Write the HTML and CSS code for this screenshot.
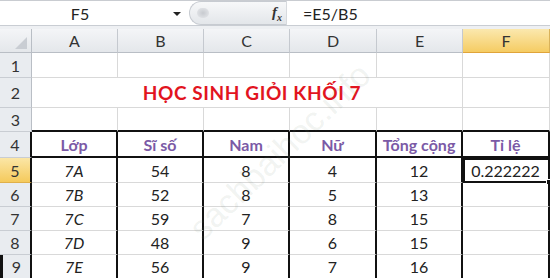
FILE: index.html
```html
<!DOCTYPE html>
<html lang="vi">
<head>
<meta charset="utf-8">
<link rel="stylesheet" href="styles.css">
</head>
<body>
<div class="app">
  <div class="fbar">
    <div class="namebox"><span class="ref">F5</span><span class="arrow"></span></div>
    <div class="pill"><span class="knob"></span><span class="fx">f<sub>x</sub></span></div>
    <div class="formula">=E5/B5</div>
  </div>
  <div class="band"></div>
  <div class="sheet">
    <div class="c corner"><span class="tri"></span></div>
    <div class="c ch">A</div><div class="c ch">B</div><div class="c ch">C</div><div class="c ch">D</div><div class="c ch">E</div><div class="c ch sel">F</div>

    <div class="c rh">1</div><div class="c"></div><div class="c"></div><div class="c"></div><div class="c"></div><div class="c"></div><div class="c"></div>

    <div class="c rh">2</div><div class="c title">HỌC SINH GIỎI KHỐI 7</div><div class="c"></div>

    <div class="c rh">3</div><div class="c tb"></div><div class="c tb"></div><div class="c tb"></div><div class="c tb"></div><div class="c tb"></div><div class="c tb"></div>

    <div class="c rh th">4</div><div class="c t hd">Lớp</div><div class="c t hd">Sĩ số</div><div class="c t hd">Nam</div><div class="c t hd">Nữ</div><div class="c t hd">Tổng cộng</div><div class="c t hd">Tỉ lệ</div>

    <div class="c rh th rsel">5</div><div class="c t it">7A</div><div class="c t">54</div><div class="c t">8</div><div class="c t">4</div><div class="c t">12</div><div class="c t active">0.222222<span class="handle"></span></div>

    <div class="c rh th">6</div><div class="c t it">7B</div><div class="c t">52</div><div class="c t">8</div><div class="c t">5</div><div class="c t">13</div><div class="c t"></div>

    <div class="c rh th">7</div><div class="c t it">7C</div><div class="c t">59</div><div class="c t">7</div><div class="c t">8</div><div class="c t">15</div><div class="c t"></div>

    <div class="c rh th">8</div><div class="c t it">7D</div><div class="c t">48</div><div class="c t">9</div><div class="c t">6</div><div class="c t">15</div><div class="c t"></div>

    <div class="c rh th mark">9</div><div class="c t it">7E</div><div class="c t">56</div><div class="c t">9</div><div class="c t">7</div><div class="c t">16</div><div class="c t"></div>
  </div>
  <div class="watermark">sachbaihoc.info</div>
</div>
</body>
</html>
```

FILE: styles.css
```css
* { box-sizing: border-box; }
html, body { margin: 0; padding: 0; background: #fff; }
body {
  font-family: Lato, "Open Sans", "Liberation Sans", sans-serif;
  font-size: 16px;
  color: #222;
  width: 550px;
  height: 278px;
  overflow: hidden;
}
.app { position: relative; width: 550px; height: 278px; overflow: hidden; }

.fbar {
  display: flex;
  height: 25px;
  border-top: 1px solid #c9ccd1;
  background: #fff;
}
.namebox {
  width: 189px;
  display: flex;
  align-items: center;
  position: relative;
}
.ref { width: 160px; text-align: center; color: #222; font-size: 16px; }
.arrow {
  position: absolute;
  left: 173px;
  top: 11px;
  width: 0; height: 0;
  border-left: 4px solid transparent;
  border-right: 4px solid transparent;
  border-top: 4px solid #222;
}
.pill {
  width: 97px;
  height: 24px;
  border-radius: 13px 0 0 13px;
  background: linear-gradient(#f7f8f9, #e3e6ea);
  border: 1px solid #c7cbd1;
  border-right: none;
  display: flex;
  align-items: center;
  justify-content: space-between;
  padding: 0 4px 0 7px;
}
.knob {
  width: 12px; height: 10px;
  border-radius: 6px;
  background: radial-gradient(#c7cacf, #e8eaed);
}
.fx {
  font-family: "Liberation Serif", serif;
  font-style: italic;
  font-weight: bold;
  font-size: 15px;
  color: #333;
}
.fx sub { font-size: 10px; }
.formula {
  flex: 1;
  display: flex;
  align-items: center;
  padding-left: 16px;
  font-size: 16px;
  color: #222;
  border-left: 1px solid #d7dade;
}

.band {
  height: 4px;
  border-top: 1px solid #c9cdd3;
  background: #eef0f3;
}

.sheet {
  display: grid;
  grid-template-columns: 32px 86px 86px 86px 87px 86px 87px;
  grid-template-rows: 24px 25px 30px 24px 26px 25px 24px 24px 24px 24px;
}
.c {
  border-right: 1px solid #d9d9d9;
  border-bottom: 1px solid #d9d9d9;
  display: flex;
  align-items: center;
  justify-content: center;
  position: relative;
  white-space: nowrap;
}
.ch {
  background: linear-gradient(#f4f5f7, #e4e7eb);
  border-right: 1px solid #c5c9cf;
  border-bottom: 1px solid #b9bec5;
  color: #333;
  font-size: 16px;
}
.ch.sel {
  background: linear-gradient(#fbe8ae, #f5cc63);
  border-bottom: 1px solid #e0a43a;
  border-right: 1px solid #d9b25a;
}
.corner {
  background: linear-gradient(#f4f5f7, #e4e7eb);
  border-right: 1px solid #b9bec5;
  border-bottom: 1px solid #b9bec5;
}
.tri {
  position: absolute;
  right: 4px;
  bottom: 3px;
  width: 0; height: 0;
  border-left: 12px solid transparent;
  border-bottom: 12px solid #c9cdd3;
}
.rh {
  background: #e9ecf0;
  border-right: 1px solid #b9bec5;
  border-bottom: 1px solid #c9cdd3;
  color: #333;
  font-size: 16px;
}
.rh.rsel {
  background: linear-gradient(#fbe6a6, #f5ca5c);
  border-bottom-color: #e0b04a;
}
.rh.th { border-right: 2px solid #111; }
.rh.mark { border-left: 3px solid #111; }

.title {
  grid-column: span 5;
  color: #e2141f;
  font-weight: bold;
  font-size: 19px;
  letter-spacing: 0.6px;
  padding-left: 10px;
}
.tb { border-bottom: 2px solid #111; }
.t { border-right: 2px solid #111; color: #222; }
.hd {
  border-bottom: 2px solid #111;
  color: #7b5aa6;
  font-weight: bold;
}
.it { font-style: italic; }
.active {
  outline: 2px solid #111;
  outline-offset: -2px;
  padding-top: 1px;
  border-bottom: 2px solid #111;
}
.handle {
  position: absolute;
  right: -4px;
  bottom: -4px;
  width: 6px; height: 6px;
  background: #111;
  border: 1px solid #fff;
}

.watermark {
  position: absolute;
  left: 120px;
  top: 132px;
  width: 320px;
  text-align: center;
  font-size: 34px;
  font-family: "Liberation Sans", sans-serif;
  color: rgba(120, 140, 120, 0.11);
  transform: rotate(-44deg);
  transform-origin: center;
  pointer-events: none;
}
```
